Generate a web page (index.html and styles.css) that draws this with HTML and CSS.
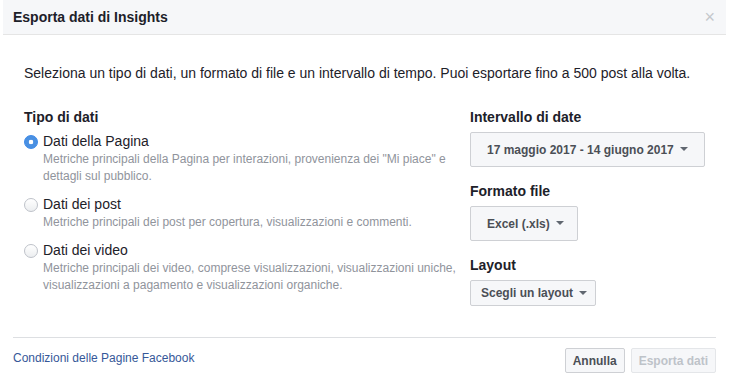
FILE: index.html
```html
<!DOCTYPE html>
<html lang="it">
<head>
    <meta charset="UTF-8">
    <meta name="viewport" content="width=device-width, initial-scale=1.0">
    <title>Esporta dati di Insights</title>
    <link rel="stylesheet" href="styles.css">
</head>
<body>
    <div class="dialog">
        <div class="dialog-header">
            <h1>Esporta dati di Insights</h1>
            <span class="close">&times;</span>
        </div>

        <div class="dialog-body">
            <p class="intro">Seleziona un tipo di dati, un formato di file e un intervallo di tempo. Puoi esportare fino a 500 post alla volta.</p>

            <div class="columns">
                <div class="left-col">
                    <h2>Tipo di dati</h2>
                    <div class="option">
                        <span class="radio checked"></span>
                        <div>
                            <div class="option-label">Dati della Pagina</div>
                            <div class="option-desc">Metriche principali della Pagina per interazioni, provenienza dei "Mi piace" e dettagli sul pubblico.</div>
                        </div>
                    </div>
                    <div class="option">
                        <span class="radio"></span>
                        <div>
                            <div class="option-label">Dati dei post</div>
                            <div class="option-desc">Metriche principali dei post per copertura, visualizzazioni e commenti.</div>
                        </div>
                    </div>
                    <div class="option">
                        <span class="radio"></span>
                        <div>
                            <div class="option-label">Dati dei video</div>
                            <div class="option-desc">Metriche principali dei video, comprese visualizzazioni, visualizzazioni uniche, visualizzazioni a pagamento e visualizzazioni organiche.</div>
                        </div>
                    </div>
                </div>

                <div class="right-col">
                    <h2>Intervallo di date</h2>
                    <button class="select select-date">17 maggio 2017 - 14 giugno 2017 <span class="caret"></span></button>
                    <h2>Formato file</h2>
                    <button class="select select-format">Excel (.xls) <span class="caret"></span></button>
                    <h2>Layout</h2>
                    <button class="select select-small">Scegli un layout <span class="caret"></span></button>
                </div>
            </div>
        </div>

        <div class="dialog-footer">
            <a href="#terms">Condizioni delle Pagine Facebook</a>
            <div class="footer-buttons">
                <button class="btn">Annulla</button>
                <button class="btn disabled">Esporta dati</button>
            </div>
        </div>
    </div>
</body>
</html>
```

FILE: styles.css
```css
body {
  font-family: "Liberation Sans", Arial, Helvetica, sans-serif;
  margin: 0;
  padding: 0;
  background: #fff;
  color: #1d2129;
}

.dialog {
  width: 729px;
  height: 383px;
  background: #fff;
}

.dialog-header {
  margin: 0 3px;
  height: 34px;
  background: #f6f7f9;
  border-bottom: 1px solid #e5e5e5;
  display: flex;
  justify-content: space-between;
  align-items: center;
  padding: 0 10px;
}

.dialog-header h1 {
  margin: 0;
  font-size: 14px;
  font-weight: bold;
  color: #1d2129;
}

.close {
  color: #c4c7cc;
  font-size: 18px;
  line-height: 18px;
  margin-right: 1px;
}

.dialog-body {
  padding: 29px 24px 0 24px;
}

.intro {
  margin: 0;
  font-size: 14px;
  line-height: 18px;
}

.columns {
  display: grid;
  grid-template-columns: 1fr 235px;
  gap: 6px;
  margin-top: 26px;
}

h2 {
  margin: 0;
  font-size: 14px;
  line-height: 18px;
  font-weight: bold;
  color: #1d2129;
}

.left-col h2 {
  margin-bottom: 6px;
}

.option {
  display: flex;
  gap: 5px;
  margin-bottom: 10px;
}

.radio {
  flex: none;
  width: 12px;
  height: 12px;
  margin-top: 3px;
  border: 1px solid #bec2c9;
  border-radius: 50%;
  background: linear-gradient(#fff, #eceef0);
}

.radio.checked {
  border-color: #3b88e8;
  background: radial-gradient(circle, #fff 0, #fff 2px, #4a90e2 2.6px);
}

.option-label {
  font-size: 14px;
  line-height: 18px;
}

.option-desc {
  font-size: 12px;
  line-height: 17px;
  color: #90949c;
  margin-top: 1px;
}

.right-col h2 {
  margin-bottom: 6px;
}

.select {
  display: block;
  font-family: inherit;
  font-size: 12px;
  font-weight: bold;
  color: #4b4f56;
  background: #f6f7f9;
  border: 1px solid #ced0d4;
  border-radius: 2px;
  height: 35px;
  padding: 0 12px 0 16px;
  margin-bottom: 15px;
  text-align: left;
  white-space: nowrap;
}

.select-date {
  width: 235px;
}

.select-format {
  width: 108px;
}

.select-small {
  height: 26px;
  width: 126px;
  padding: 0 10px;
}

.caret {
  display: inline-block;
  width: 0;
  height: 0;
  border-left: 4px solid transparent;
  border-right: 4px solid transparent;
  border-top: 4px solid #606770;
  vertical-align: middle;
  margin-left: 3px;
  margin-bottom: 2px;
}

.dialog-footer {
  margin: 16px 13px 0 13px;
  border-top: 1px solid #dddfe2;
  padding-top: 10px;
  display: flex;
  justify-content: space-between;
  align-items: flex-start;
}

.dialog-footer a {
  font-size: 12px;
  color: #365899;
  text-decoration: none;
  margin-top: 3px;
}

.footer-buttons {
  display: flex;
  gap: 6px;
}

.btn {
  font-family: inherit;
  font-size: 12px;
  font-weight: bold;
  color: #4b4f56;
  background: #f6f7f9;
  border: 1px solid #ced0d4;
  border-radius: 2px;
  height: 25px;
  padding: 0 7px;
}

.btn.disabled {
  color: #bec3c9;
  border-color: #e4e6e9;
}
```
